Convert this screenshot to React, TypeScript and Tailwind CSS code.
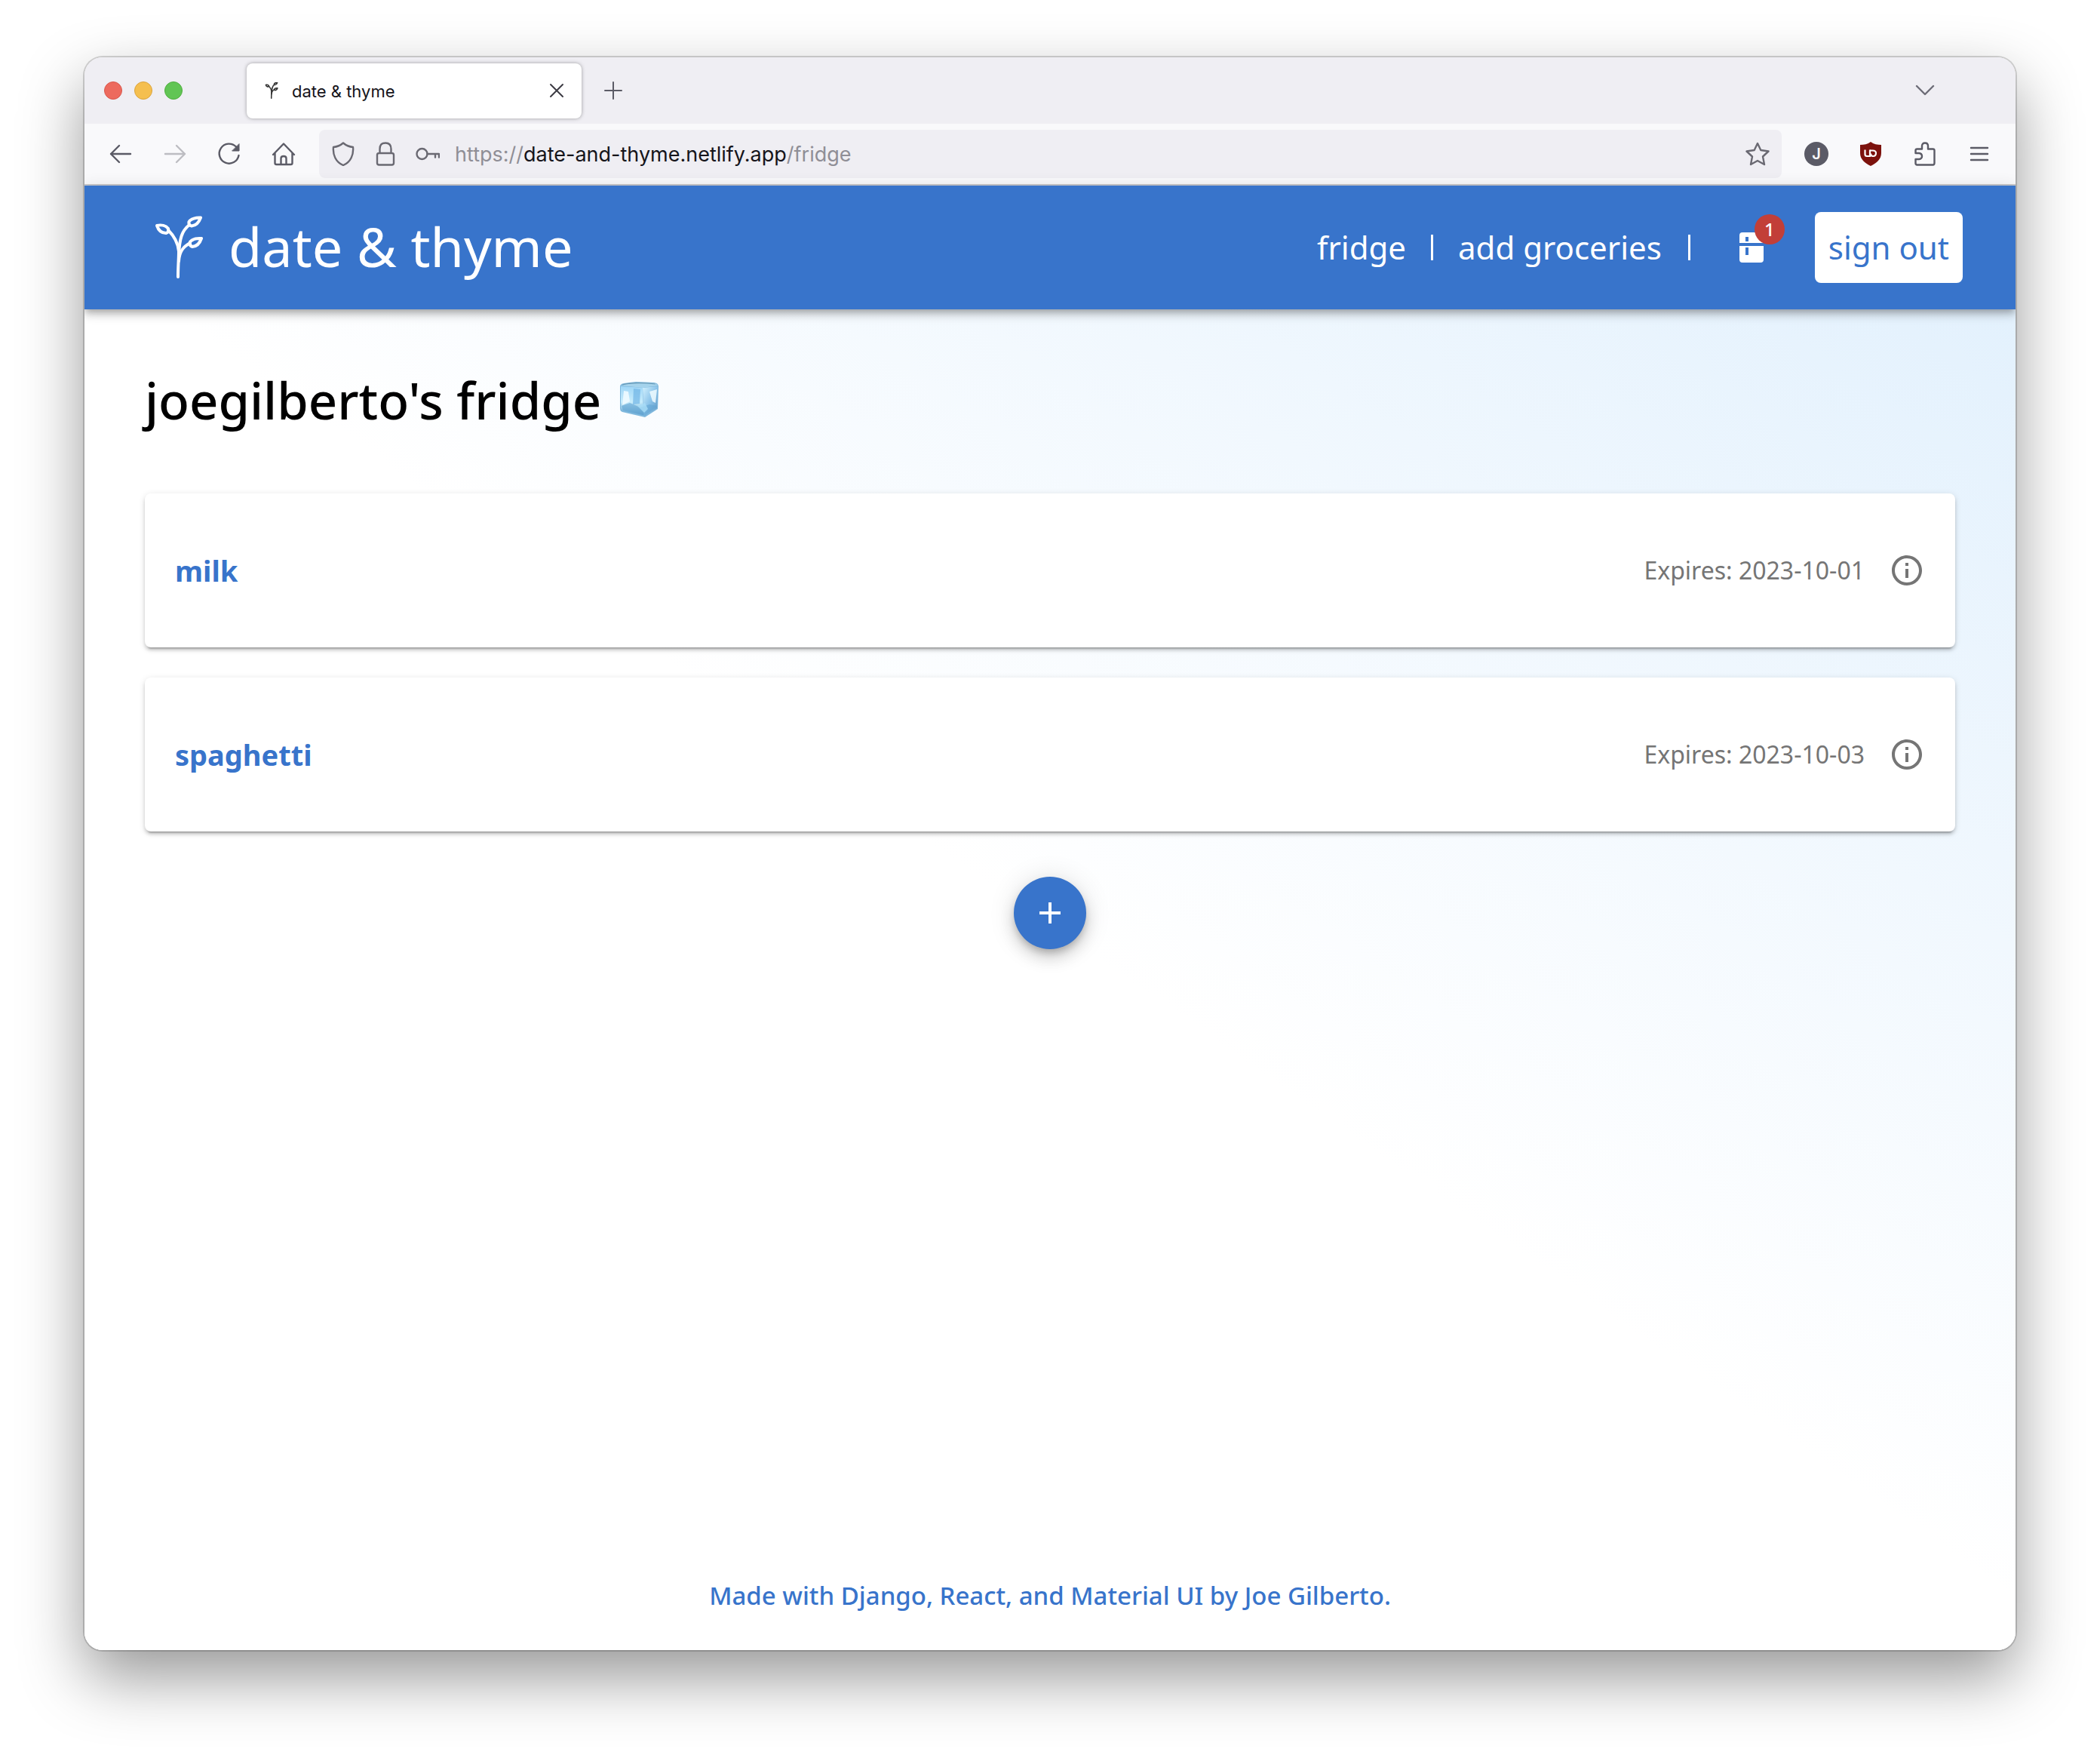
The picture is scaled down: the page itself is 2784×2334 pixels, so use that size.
import React from "react";

type IconProps = { className?: string; children: React.ReactNode };

function LineIcon({ className = "", children }: IconProps) {
  return (
    <svg
      viewBox="0 0 32 32"
      fill="none"
      stroke="currentColor"
      strokeWidth="2.4"
      strokeLinecap="round"
      strokeLinejoin="round"
      className={"size-8 shrink-0 " + className}
      aria-hidden="true"
    >
      {children}
    </svg>
  );
}

function Sprig({ className = "" }: { className?: string }) {
  return (
    <svg
      viewBox="0 0 64 84"
      fill="none"
      stroke="currentColor"
      strokeLinecap="round"
      strokeLinejoin="round"
      className={className}
      aria-hidden="true"
    >
      <path d="M31 81C31 66 32 58 32 47C31 35 25 26 18 19" />
      <path d="M32 52C33 30 36 20 46 12" />
      <path d="M32 60C33 47 38 41 47 36" />
      <path d="M3 13C9 11.500 15 13 18 17C19 20 18 22 15 23C9 23 5 19 3 13Z" />
      <path d="M61 2.500C55 2 48 4 45.500 8C45 11 46 13 49 13.500C55 13 59 8 61 2.500Z" />
      <path d="M62 30C56 29.500 50 31 47 34.500C46 38 47 40 50 41C56 40.500 60 36 62 30Z" />
    </svg>
  );
}

function IceCube() {
  return (
    <svg viewBox="0 0 56 52" className="h-[52px] w-14" role="img" aria-label="ice">
      <defs>
        <linearGradient id="ice-left" x1="0" y1="0" x2="0" y2="1">
          <stop offset="0" stopColor="#9fd6f7" />
          <stop offset="0.55" stopColor="#c9edfc" />
          <stop offset="1" stopColor="#5f9fcb" />
        </linearGradient>
        <linearGradient id="ice-right" x1="0" y1="0" x2="1" y2="1">
          <stop offset="0" stopColor="#d3f1fe" />
          <stop offset="0.5" stopColor="#8cc4ea" />
          <stop offset="1" stopColor="#5a93bf" />
        </linearGradient>
      </defs>
      <path d="M3 8Q3 5 8 4L24 2L48 3Q54 4 54 8L53 38L36 49L6 42Q3 41 3 37Z" fill="#7fb8dd" />
      <path d="M4 8L33 10L34 46L7 40Q4 39 4 36Z" fill="url(#ice-left)" />
      <path d="M33 10L53 8L52 37L35 47Z" fill="url(#ice-right)" />
      <path d="M4 7Q14 4 26 3L50 4L53 7L33 10Z" fill="#a5d3ec" />
      <path d="M8 14L14 15L16 28L6 33Z" fill="#f0fbff" opacity="0.9" />
      <path d="M21 11L30 12L29 31L20 32Z" fill="#71b5e6" opacity="0.7" />
      <path d="M42 15L52 12L50 30L46 28Z" fill="#f0fbff" opacity="0.85" />
      <path d="M5 34L16 30L30 36L42 32L52 34L36 47L7 40Z" fill="#62a5d4" opacity="0.6" />
      <path d="M26 34L36 30L40 38L35 43Z" fill="#a9ddf8" opacity="0.8" />
      <path d="M6 6Q22 2 50 5" stroke="#5d8eab" strokeWidth="1.2" fill="none" opacity="0.8" />
    </svg>
  );
}

function ToolButton({ label, children, className = "" }: { label: string; children: React.ReactNode; className?: string }) {
  return (
    <button type="button" aria-label={label} className={"flex h-16 w-[72px] shrink-0 items-center justify-center " + className}>
      {children}
    </button>
  );
}

function TabStrip() {
  return (
    <div className="flex h-[88px] items-center bg-[#efeef3] pl-[26px]">
      <div className="flex gap-4">
        <span className="size-6 rounded-full border border-[#d9574c] bg-[#ed6a5e]" />
        <span className="size-6 rounded-full border border-[#dba43d] bg-[#f5bf4f]" />
        <span className="size-6 rounded-full border border-[#4fae3e] bg-[#61c554]" />
      </div>
      <div className="ml-[85px] flex h-[73px] w-[444px] items-center rounded-lg bg-white pr-[17px] pl-6 shadow-[0_0_5px_rgba(0,0,0,0.35)]">
        <Sprig className="h-[22px] w-[18px] stroke-6 text-[#333]" />
        <span className="ml-[18px] grow pt-[3px] text-[22px] text-[#15141a]">date &amp; thyme</span>
        <button type="button" aria-label="Close tab" className="text-[#3c3b43]">
          <LineIcon>
            <path d="M8 8L24 24M24 8L8 24" strokeWidth="2" />
          </LineIcon>
        </button>
      </div>
      <button type="button" aria-label="New tab" className="ml-[26px] text-[#5b5b66]">
        <LineIcon>
          <path d="M5 16H27M16 5V27" strokeWidth="2" />
        </LineIcon>
      </button>
      <button type="button" aria-label="List all tabs" className="mr-[104px] ml-auto text-[#6d6c76]">
        <LineIcon>
          <path d="M5 10L16 21L27 10" />
        </LineIcon>
      </button>
    </div>
  );
}

function Toolbar() {
  return (
    <div className="flex h-[82px] items-center border-b-2 border-[#c9c9cc] bg-[#f9f9fb] px-3 text-[#5b5b66]">
      <ToolButton label="Back">
        <LineIcon>
          <path d="M29 16H3M14 5L3 16L14 27" />
        </LineIcon>
      </ToolButton>
      <ToolButton label="Forward" className="text-[#bdbdc2]">
        <LineIcon>
          <path d="M3 16H29M18 5L29 16L18 27" />
        </LineIcon>
      </ToolButton>
      <ToolButton label="Reload">
        <LineIcon>
          <path d="M28.500 18A13 13 0 1 1 25 6.500L28 10" />
          <path d="M29 3V12H20Z" fill="currentColor" strokeWidth="1" />
        </LineIcon>
      </ToolButton>
      <ToolButton label="Home">
        <LineIcon>
          <path d="M2 17L16 2.500L30 17M4.500 15V28Q4.500 30 6.500 30H25.500Q27.500 30 27.500 28V15M12.500 30V22Q12.500 19 16 19Q19.500 19 19.500 22V30" />
        </LineIcon>
      </ToolButton>
      <div className="ml-[11px] flex h-16 grow items-center rounded-lg bg-[#efeef3] px-4 text-[#6a6972]">
        <LineIcon>
          <path d="M16 1.500C20 5 24 6.500 29 7C30 17 26 27 16 31C6 27 2 17 3 7C8 6.500 12 5 16 1.500Z" />
        </LineIcon>
        <LineIcon className="ml-6">
          <path d="M7.500 15H24.500Q27 15 27 17.500V28Q27 30.500 24.500 30.500H7.500Q5 30.500 5 28V17.500Q5 15 7.500 15ZM8.500 15V9.500Q8.500 1.500 16 1.500Q23.500 1.500 23.500 9.500V15" />
        </LineIcon>
        <LineIcon className="ml-6">
          <circle cx="8.500" cy="16" r="7" />
          <path d="M15.500 16H31V20.500M26 16V20.500" />
        </LineIcon>
        <div className="ml-5 flex grow pt-[3px] text-[27px] text-[#8f8e96]">
          <span>https://</span>
          <input
            type="text"
            aria-label="Address"
            defaultValue="date-and-thyme.netlify.app"
            className="field-sizing-content bg-transparent p-0 text-[#15141a] outline-none"
          />
          <span>/fridge</span>
        </div>
        <button type="button" aria-label="Bookmark this page">
          <LineIcon>
            <path d="M16 2L20.300 11L30.500 12.500L23 19.500L25 30L16 25L7 30L9 19.500L1.500 12.500L11.700 11Z" />
          </LineIcon>
        </button>
      </div>
      <ToolButton label="Account" className="ml-[10px]">
        <span className="flex size-8 items-center justify-center rounded-full bg-[#5b5b66] text-xl font-semibold text-[#f9f9fb]">J</span>
      </ToolButton>
      <ToolButton label="Content blocker">
        <svg viewBox="0 0 32 32" className="size-8" aria-hidden="true">
          <path d="M16 0C20 3 25 4 30 4V15C30 23 24 28 16 32C8 28 2 23 2 15V4C7 4 12 3 16 0Z" fill="#7c120d" />
          <path d="M8.500 10.500V16.500Q8.500 19 11 19H15V10.500" fill="none" stroke="#fff" strokeWidth="2.200" />
          <path d="M15 11.500H18.500Q23 11.500 23 15Q23 19 19 19Q16 19 16 15.500" fill="none" stroke="#fff" strokeWidth="2.200" />
        </svg>
      </ToolButton>
      <ToolButton label="Extensions">
        <LineIcon>
          <path d="M5.500 9.500H12V5.500Q12 1.500 16 1.500Q20 1.500 20 5.500V9.500H26.500Q28.500 9.500 28.500 11.500V28Q28.500 30.500 26.500 30.500H5.500Q3.500 30.500 3.500 28.500V23H8Q12 22.500 12 19Q12 15.500 8 15H3.500V11.500Q3.500 9.500 5.500 9.500Z" />
        </LineIcon>
      </ToolButton>
      <ToolButton label="Open menu">
        <LineIcon>
          <path d="M5 8H27M5 16H27M5 24H27" />
        </LineIcon>
      </ToolButton>
    </div>
  );
}

function SiteHeader() {
  return (
    <header className="relative z-10 flex h-[164px] items-center bg-[#3874cb] pr-[70px] pl-[93px] text-white shadow-[0_4px_8px_-2px_rgba(0,0,0,0.2),0_8px_10px_rgba(0,0,0,0.14),0_2px_20px_rgba(0,0,0,0.12)]">
      <a href="#home" className="flex items-center gap-[34px] text-[72px] leading-none">
        <Sprig className="h-[84px] w-16 stroke-4" />
        <span className="pb-1">date &amp; thyme</span>
      </a>
      <nav className="ml-auto flex items-center text-[42px] leading-none">
        <a href="#fridge">fridge</a>
        <span className="mx-[33px] h-[34px] w-[3px] bg-white" />
        <a href="#add">add groceries</a>
        <span className="ml-[35px] h-[34px] w-[3px] bg-white" />
        <a href="#expiring" aria-label="Expiring items" className="relative ml-[65px] block">
          <svg viewBox="0 0 32 40" className="h-10 w-8" fill="currentColor" aria-hidden="true">
            <path fillRule="evenodd" d="M4 0H28Q32 0 32 4V14H0V4Q0 0 4 0ZM8 6V12H12V6Z" />
            <path fillRule="evenodd" d="M0 18H32V36Q32 40 28 40H4Q0 40 0 36ZM8 20V30H12V20Z" />
          </svg>
          <span className="absolute -top-6 left-5 flex size-10 items-center justify-center rounded-full bg-[#c23f38] text-2xl font-medium">1</span>
        </a>
        <button type="button" className="ml-[68px] flex h-[94px] items-center rounded-lg bg-white px-[18px] text-[#3874cb]">
          sign out
        </button>
      </nav>
    </header>
  );
}

const groceries = [
  { name: "milk", expires: "2023-10-01" },
  { name: "spaghetti", expires: "2023-10-03" },
];

function GroceryCard({ name, expires }: { name: string; expires: string }) {
  return (
    <li className="flex h-[204px] items-center rounded-lg bg-white px-10 shadow-[0_6px_2px_-4px_rgba(0,0,0,0.2),0_4px_4px_rgba(0,0,0,0.14),0_2px_10px_rgba(0,0,0,0.12)]">
      <a href={"#" + name} className="grow text-[38px] font-bold text-[#3874cb]">
        {name}
      </a>
      <span className="text-[32px] text-[#757575]">Expires: {expires}</span>
      <button type="button" aria-label={"Details for " + name} className="ml-8 text-[#757575]">
        <svg viewBox="0 0 24 24" className="size-12" fill="currentColor" aria-hidden="true">
          <path d="M11 7h2v2h-2zm0 4h2v6h-2zm1-9C6.480 2 2 6.480 2 12s4.480 10 10 10 10-4.480 10-10S17.520 2 12 2zm0 18c-4.410 0-8-3.590-8-8s3.590-8 8-8 8 3.590 8 8-3.590 8-8 8z" />
        </svg>
      </button>
    </li>
  );
}

export default function App() {
  return (
    <div className="flex min-h-screen flex-col bg-white px-28 pt-[76px] pb-[147px] font-[Inter,sans-serif]">
      <div className="flex grow flex-col overflow-hidden rounded-[24px] shadow-[0_0_0_2px_rgba(0,0,0,0.16),0_36px_84px_rgba(0,0,0,0.41)]">
        <TabStrip />
        <Toolbar />
        <div className="flex grow flex-col bg-white font-['Noto_Sans',sans-serif]">
          <SiteHeader />
          <main className="flex grow flex-col bg-linear-to-tr from-white from-52% to-[#e3f1fd] to-100% px-20 pt-[70px]">
            <h1 className="flex items-center gap-[22px] text-[67px] leading-[100px] font-medium text-black">
              joegilberto's fridge <IceCube />
            </h1>
            <ul className="mt-[74px] flex flex-col gap-10">
              {groceries.map((item) => (
                <GroceryCard key={item.name} name={item.name} expires={item.expires} />
              ))}
            </ul>
            <button
              type="button"
              aria-label="Add groceries"
              className="mt-[60px] flex size-24 items-center justify-center self-center rounded-full bg-[#3874cb] text-white shadow-[0_6px_10px_-2px_rgba(0,0,0,0.2),0_12px_20px_rgba(0,0,0,0.14),0_2px_36px_rgba(0,0,0,0.12)]"
            >
              <svg viewBox="0 0 24 24" className="size-12" fill="currentColor" aria-hidden="true">
                <path d="M19 13h-6v6h-2v-6H5v-2h6V5h2v6h6v2z" />
              </svg>
            </button>
            <footer className="mt-auto pb-12 text-center text-[33px] leading-[48px] font-medium text-[#3874cb]">
              <a href="#about">Made with Django, React, and Material UI by Joe Gilberto.</a>
            </footer>
          </main>
        </div>
      </div>
    </div>
  );
}
